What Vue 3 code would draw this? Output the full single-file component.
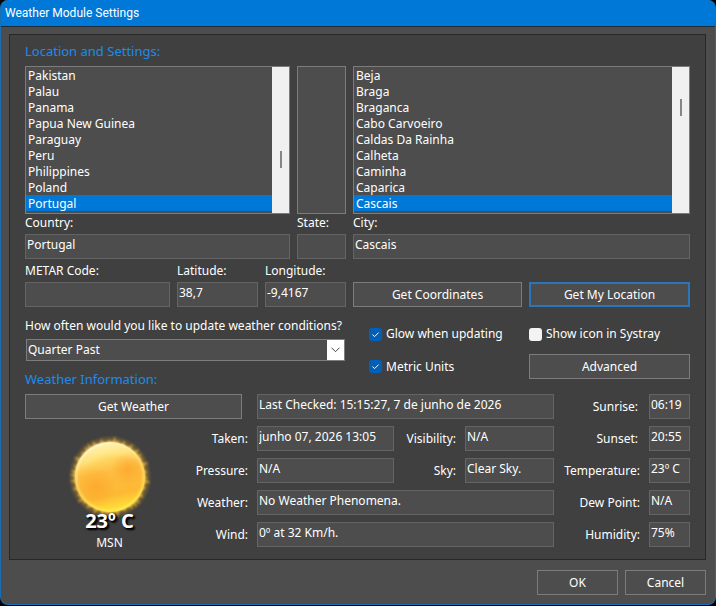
<script setup>
import { ref } from 'vue'

const countries = ['Pakistan', 'Palau', 'Panama', 'Papua New Guinea', 'Paraguay', 'Peru', 'Philippines', 'Poland', 'Portugal']
const cities = ['Beja', 'Braga', 'Braganca', 'Cabo Carvoeiro', 'Caldas Da Rainha', 'Calheta', 'Caminha', 'Caparica', 'Cascais']

const country = ref('Portugal')
const state = ref('')
const city = ref('Cascais')
const metar = ref('')
const latitude = ref('38,7')
const longitude = ref('-9,4167')
const interval = ref('Quarter Past')
const glow = ref(true)
const metric = ref(true)
const systray = ref(false)

// Corona around the sun: thin spikes of uneven length
const spikes = Array.from({ length: 38 }, (_, i) => {
  const a = (i / 38) * Math.PI * 2 + Math.sin(i * 5) * 0.05
  const r = 38 + ((i * i * 3 + i) % 7) * 0.8
  const p = (ang, rad) => `${(48 + Math.cos(ang) * rad).toFixed(1)} ${(46 + Math.sin(ang) * rad).toFixed(1)}`
  return `M${p(a - 0.08, 33)}L${p(a + 0.02, r)}L${p(a + 0.08, 33)}Z`
}).join('')
</script>

<template>
  <main class="window">
    <header class="titlebar"><h1>Weather Module Settings</h1></header>

    <form class="body" @submit.prevent>
      <section class="panel">
        <h2>Location and Settings:</h2>

        <div class="halves lists">
          <div class="pair">
            <div class="listbox">
              <select id="country-list" v-model="country" size="9" aria-label="Countries">
                <option v-for="c in countries" :key="c">{{ c }}</option>
              </select>
              <div class="scroll low"><i></i></div>
            </div>
            <div class="listbox">
              <select id="state-list" v-model="state" size="9" aria-label="States"></select>
            </div>
          </div>
          <div class="listbox">
            <select id="city-list" v-model="city" size="9" aria-label="Cities">
              <option v-for="c in cities" :key="c">{{ c }}</option>
            </select>
            <div class="scroll high"><i></i></div>
          </div>
        </div>

        <div class="halves">
          <div class="pair">
            <div class="field"><label for="country">Country:</label><input id="country" v-model="country" type="text"></div>
            <div class="field"><label for="state">State:</label><input id="state" v-model="state" type="text"></div>
          </div>
          <div class="field"><label for="city">City:</label><input id="city" v-model="city" type="text"></div>
        </div>

        <div class="halves coords">
          <div class="triple">
            <div class="field"><label for="metar">METAR Code:</label><input id="metar" v-model="metar" type="text"></div>
            <div class="field"><label for="lat">Latitude:</label><input id="lat" v-model="latitude" type="text"></div>
            <div class="field"><label for="lon">Longitude:</label><input id="lon" v-model="longitude" type="text"></div>
          </div>
          <div class="actions">
            <button type="button">Get Coordinates</button>
            <button type="button" class="focused">Get My Location</button>
          </div>
        </div>

        <div class="halves update">
          <div class="interval">
            <label for="interval">How often would you like to update weather conditions?</label>
            <div class="combo">
              <select id="interval" v-model="interval">
                <option>Quarter Past</option>
              </select>
              <span class="arrow">
                <svg width="9" height="6" viewBox="0 0 9 6"><path d="M0.5 0.7L4.5 4.7L8.5 0.7" fill="none" stroke="#444" /></svg>
              </span>
            </div>
            <h2 class="second">Weather Information:</h2>
          </div>
          <div class="actions options">
            <label class="check"><input v-model="glow" type="checkbox"><svg viewBox="0 0 13 13"><path d="M3.5 6.6L5.6 8.6L9.6 4.6" /></svg>Glow when updating</label>
            <label class="check end"><input v-model="systray" type="checkbox"><svg viewBox="0 0 13 13"><path d="M3.5 6.6L5.6 8.6L9.6 4.6" /></svg>Show icon in Systray</label>
            <label class="check"><input v-model="metric" type="checkbox"><svg viewBox="0 0 13 13"><path d="M3.5 6.6L5.6 8.6L9.6 4.6" /></svg>Metric Units</label>
            <button type="button">Advanced</button>
          </div>
        </div>

        <div class="weather">
          <button type="button" class="get">Get Weather</button>
          <input class="wide" type="text" readonly aria-label="Last checked" value="Last Checked: 15:15:27, 7 de junho de 2026">
          <label for="sunrise" class="inset">Sunrise:</label><input id="sunrise" type="text" readonly value="06:19">

          <figure class="now">
            <svg class="sun" width="96" height="92" viewBox="0 0 96 92" role="img" aria-label="Sunny">
              <defs>
                <radialGradient id="halo">
                  <stop offset="0.76" stop-color="#ffc32e" stop-opacity="0.8" />
                  <stop offset="0.86" stop-color="#e0a020" stop-opacity="0.4" />
                  <stop offset="1" stop-color="#c08a18" stop-opacity="0" />
                </radialGradient>
                <linearGradient id="disc" x1="0.4" y1="0" x2="0.6" y2="1">
                  <stop offset="0" stop-color="#fff3b4" />
                  <stop offset="0.2" stop-color="#ffdc6c" />
                  <stop offset="0.42" stop-color="#fdbe42" />
                  <stop offset="0.75" stop-color="#fdb934" />
                  <stop offset="1" stop-color="#ffe63c" />
                </linearGradient>
                <radialGradient id="warm">
                  <stop offset="0" stop-color="#fba028" stop-opacity="0.6" />
                  <stop offset="0.5" stop-color="#fba028" stop-opacity="0.3" />
                  <stop offset="1" stop-color="#fba028" stop-opacity="0" />
                </radialGradient>
                <linearGradient id="rim" x1="0.25" y1="0" x2="0.7" y2="1">
                  <stop offset="0" stop-color="#fffbe0" />
                  <stop offset="0.5" stop-color="#ffe27a" stop-opacity="0.8" />
                  <stop offset="1" stop-color="#fff04a" />
                </linearGradient>
                <filter id="soft" x="-20%" y="-20%" width="140%" height="140%"><feGaussianBlur stdDeviation="1" /></filter>
                <filter id="softer" x="-20%" y="-40%" width="140%" height="180%"><feGaussianBlur stdDeviation="2" /></filter>
              </defs>
              <circle cx="48" cy="46" r="42" fill="url(#halo)" />
              <path :d="spikes" fill="#ffc740" opacity="0.6" filter="url(#soft)" />
              <circle cx="48" cy="46" r="35" fill="url(#disc)" />
              <ellipse cx="66" cy="38" rx="17" ry="17" fill="url(#warm)" />
              <ellipse cx="34" cy="56" rx="21" ry="20" fill="url(#warm)" />
              <path d="M17 38C20 22 32 14 48 14C60 14 70 19 75 28C66 22 50 22 40 26C31 30 24 34 17 38Z" fill="#fff3ae" opacity="0.35" filter="url(#softer)" />
              <circle cx="48" cy="46" r="34" fill="none" stroke="url(#rim)" stroke-width="2" filter="url(#soft)" />
            </svg>
            <strong>23º C</strong>
            <figcaption>MSN</figcaption>
          </figure>

          <label for="taken">Taken:</label><input id="taken" type="text" readonly value="junho 07, 2026 13:05">
          <label for="visibility">Visibility:</label><input id="visibility" type="text" readonly value="N/A">
          <label for="sunset" class="inset">Sunset:</label><input id="sunset" type="text" readonly value="20:55">

          <label for="pressure">Pressure:</label><input id="pressure" type="text" readonly value="N/A">
          <label for="sky">Sky:</label><input id="sky" type="text" readonly value="Clear Sky.">
          <label for="temperature">Temperature:</label><input id="temperature" type="text" readonly value="23º C">

          <label for="phenomena">Weather:</label><input id="phenomena" class="wide" type="text" readonly value="No Weather Phenomena.">
          <label for="dew">Dew Point:</label><input id="dew" type="text" readonly value="N/A">

          <label for="wind">Wind:</label><input id="wind" class="wide" type="text" readonly value="0º at 32 Km/h.">
          <label for="humidity">Humidity:</label><input id="humidity" type="text" readonly value="75%">
        </div>
      </section>

      <footer>
        <button type="submit">OK</button>
        <button type="button">Cancel</button>
      </footer>
    </form>
  </main>
</template>

<style>
html,
body {
  background: #000;
}
</style>

<style scoped>
.window,
.window * {
  box-sizing: border-box;
}
.window {
  overflow: hidden;
  border: 1px solid #1a6db3;
  border-top: 0;
  border-radius: 8px;
  background: #4d4d4d;
  color: #fff;
  font: 12px/16px "Noto Sans", "Open Sans", sans-serif;
}
.titlebar {
  padding: 5px 4px;
  border-bottom: 1px solid #1d2c3a;
  background: #0078d7;
}
h1 {
  margin: 0;
  font: 12px/16px Roboto, "Open Sans", sans-serif;
}
.body {
  padding: 7px 9px 9px 8px;
}
.panel {
  padding: 8px 15px 12px;
  border: 1px solid #282828;
  background: #404040;
}
h2 {
  margin: 0;
  padding-bottom: 7px;
  color: #1c8cec;
  font-weight: 400;
  font-size: 13px;
  line-height: 16px;
}
.halves {
  display: grid;
  grid-template-columns: 321fr 337fr;
  gap: 7px;
}
.pair {
  display: grid;
  grid-template-columns: 265fr 49fr;
  gap: 7px;
}
.triple {
  display: grid;
  grid-template-columns: 145fr 81fr 81fr;
  gap: 7px;
}
.actions {
  display: grid;
  grid-template-columns: 169fr 161fr;
  gap: 7px;
  align-items: end;
}
input,
select,
button {
  min-width: 0;
  margin: 0;
  border: 1px solid #7c7c7c;
  border-radius: 0;
  outline: 0;
  background: #4d4d4d;
  color: #fff;
  font: inherit;
}
input[type="text"] {
  width: 100%;
  height: 25px;
  padding: 0 1px 4px;
  border-color: #646464;
}
button {
  height: 25px;
  padding: 0 4px;
}
.focused {
  border: 2px solid #2a76b8;
}

.listbox {
  display: flex;
  min-width: 0;
  border: 1px solid #7c7c7c;
  background: #4d4d4d;
}
.listbox select {
  flex: 1;
  height: 146px;
  padding: 0;
  border: 0;
  overflow: hidden;
  scrollbar-width: none;
}
.listbox option {
  height: 16px;
  min-height: 16px;
  padding: 0 2px;
  color: #fff;
  line-height: 16px;
}
.listbox option:checked {
  background: #0078d7 linear-gradient(#0078d7, #0078d7);
  color: #fff;
}
.scroll {
  display: flex;
  justify-content: center;
  width: 17px;
  background: #f0f0f0;
}
.scroll i {
  width: 2px;
  height: 17px;
  background: #868686;
}
.low {
  padding-top: 84px;
}
.high {
  padding-top: 32px;
}

.field {
  display: flex;
  flex-direction: column;
  min-width: 0;
}
.field label {
  padding: 1px 0 3px;
}
.coords {
  padding-top: 3px;
}
.update {
  padding: 11px 0 0;
}
.interval {
  display: flex;
  flex-direction: column;
  gap: 5px;
  padding-right: 1px;
  white-space: nowrap;
}
.combo {
  display: grid;
  margin-left: 1px;
}
.combo > * {
  grid-area: 1 / 1;
}
.combo select {
  height: 22px;
  padding: 0 20px 0 1px;
  appearance: none;
}
.arrow {
  display: flex;
  align-items: center;
  justify-content: center;
  justify-self: end;
  width: 17px;
  margin: 1px;
  background: #fff;
  pointer-events: none;
}
.second {
  padding-top: 5px;
}
.options {
  row-gap: 12px;
  align-content: start;
  padding-top: 8px;
}
.check {
  display: grid;
  grid-template-columns: 13px 1fr;
  column-gap: 4px;
  align-items: center;
  align-self: center;
  padding-left: 16px;
  white-space: nowrap;
}
.check.end {
  padding-left: 0;
}
.check input {
  width: 13px;
  height: 13px;
  border: 0;
  border-radius: 3px;
  background: #f3f3f3;
  appearance: none;
}
.check input:checked {
  background: #005fb8;
}
.check input,
.check svg {
  grid-area: 1 / 1;
}
.check svg {
  visibility: hidden;
  fill: none;
  stroke: #fff;
  pointer-events: none;
}
.check input:checked + svg {
  visibility: visible;
}

.weather {
  display: grid;
  grid-template-columns: 162fr 56fr 137fr 57fr 89fr 81fr 41fr;
  grid-auto-rows: 25px;
  gap: 7px;
}
.weather label {
  align-self: center;
  padding-right: 2px;
  text-align: right;
  white-space: nowrap;
}
.weather .inset {
  padding-right: 4px;
}
.get {
  grid-column: 1 / 3;
  margin-right: 8px;
}
.wide {
  grid-column: span 3;
}
.now {
  display: flex;
  grid-row: 2 / 6;
  flex-direction: column;
  align-items: center;
  min-width: 0;
  margin: 0;
  padding: 5px 0 0 7px;
}
.sun {
  flex: none;
  margin-bottom: -16px;
}
.now strong {
  position: relative;
  font: bold 20px/28px "Noto Sans", "Open Sans", sans-serif;
  text-shadow: 1px 1px 2px #000, 2px 2px 2px #000;
  white-space: nowrap;
}

footer {
  display: flex;
  justify-content: flex-end;
  gap: 7px;
  padding-top: 10px;
}
footer button {
  width: 81px;
}
</style>
